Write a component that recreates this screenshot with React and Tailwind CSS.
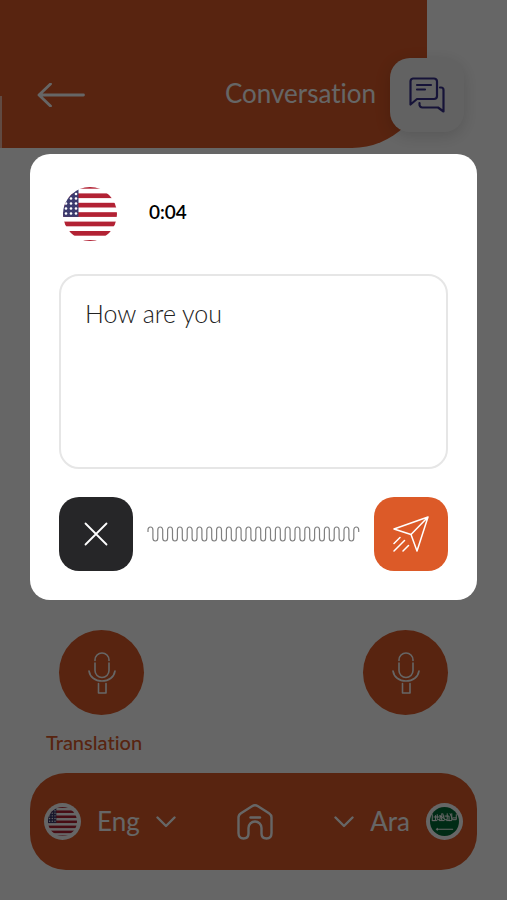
import { useId, useState } from 'react';

function UsFlag({ className }) {
  const clipId = useId();

  return (
    <svg className={className} viewBox="0 0 54 54" role="img" aria-label="English">
      <clipPath id={clipId}>
        <circle cx="27" cy="27" r="27" />
      </clipPath>
      <g clipPath={`url(#${clipId})`}>
        <rect width="54" height="54" fill="#fff" />
        {[-3, 6.4, 15.8, 25.2, 34.6, 44, 53].map((y) => (
          <rect key={y} y={y} width="54" height="4.7" fill="#b22234" />
        ))}
        <rect y="-3" width="15.5" height="32.9" fill="#3c3b6e" />
        {[
          [13, 7], [8, 11.5], [13, 16.5], [3, 16.5], [8, 16.5], [8, 21.5], [3, 26.5], [13, 26.5], [8, 26.5], [3, 21.5], [13, 11.5], [13, 21.5],
        ].map(([x, y]) => (
          <circle key={`${x}-${y}`} cx={x} cy={y} r="1.3" fill="#fff" />
        ))}
      </g>
    </svg>
  );
}

function SaudiFlag({ className }) {
  return (
    <svg className={className} viewBox="0 0 32 32" role="img" aria-label="Arabic">
      <circle cx="16" cy="16" r="16" fill="#006c35" />
      <path
        d="M2.500 8v7h3.500V9M8 8v6h3V9l2 5V7M4 11h6M14 7l2 7h3V7M16 10h5v5h3V7M22 7l3 7h4V8M2 15h6M10 15h6M18 15h4M25 12h4M12 10l4 3"
        fill="none"
        stroke="#fff"
        strokeWidth="1.1"
      />
      <path d="M7 24.500h18M8 23.500v2" fill="none" stroke="#fff" strokeWidth="1.2" strokeLinecap="round" />
    </svg>
  );
}

function MicIcon() {
  return (
    <svg className="h-[42px] w-[28px]" viewBox="0 0 28 42" fill="none" stroke="#fff" strokeWidth="1.6" strokeLinecap="round">
      <path d="M7 8.500V8a7 7 0 0 1 14 0v.5" />
      <path d="M7 11v7.500a7 7 0 0 0 14 0V11" />
      <path d="M1 19c1 6 6 10 13 10s12-4 13-10" />
      <path d="M10.500 31.500V41h7.500v-9.500" strokeLinejoin="round" />
    </svg>
  );
}

function ChevronIcon() {
  return (
    <svg className="h-3 w-5" viewBox="0 0 20 12" fill="none" stroke="currentColor" strokeWidth="2.4" strokeLinecap="round" strokeLinejoin="round">
      <path d="M1.500 1.500 10 10l8.500-8.500" />
    </svg>
  );
}

function Waveform() {
  const periods = 21;
  const step = 4.9;
  let path = 'M1 6V4';
  for (let i = 0; i <= periods; i += 1) {
    path += `a2.450 3 0 0 1 ${step} 0`;
    if (i < periods) {
      path += `v8a2.450 3 0 0 0 ${step} 0v-8`;
    }
  }
  path += 'v2';

  return (
    <svg className="h-4 min-w-0 flex-1" viewBox="0 0 213 16" fill="none" stroke="#808080" strokeWidth="1.2">
      <path d={path} />
    </svg>
  );
}

function MicButton({ label }) {
  return (
    <button aria-label={label} className="flex h-[85px] w-[85px] items-center justify-center rounded-full bg-[#dc5a28]">
      <MicIcon />
    </button>
  );
}

function RecordDialog() {
  const [text, setText] = useState('How are you');

  return (
    <div role="dialog" aria-label="Recording" className="w-full rounded-[20px] bg-white px-[29px] pt-[33px] pb-[29px]">
      <div className="flex items-center gap-8 pl-1">
        <UsFlag className="h-[54px] w-[54px]" />
        <span className="pb-1 text-[19px] leading-6 font-semibold text-black">0:04</span>
      </div>
      <textarea
        aria-label="Recognized text"
        value={text}
        onChange={(e) => setText(e.target.value)}
        className="mt-[33px] block h-[195px] w-full resize-none rounded-[20px] border-2 border-[#e6e6e6] px-6 py-[21px] text-[25px] leading-8 font-light text-[#222] outline-none"
      />
      <div className="mt-[28px] flex items-center gap-[14px]">
        <button aria-label="Cancel" className="flex h-[74px] w-[74px] items-center justify-center rounded-[20px] bg-[#262628]">
          <svg className="h-6 w-6" viewBox="0 0 24 24" fill="none" stroke="#fff" strokeWidth="1.8" strokeLinecap="round">
            <path d="M1.500 1.500l21 21M22.500 1.500l-21 21" />
          </svg>
        </button>
        <Waveform />
        <button aria-label="Send" className="flex h-[74px] w-[74px] items-center justify-center rounded-[20px] bg-[#dc5a28]">
          <svg className="h-9 w-9" viewBox="0 0 36 36" fill="none" stroke="#fff" strokeWidth="1.5" strokeLinecap="round" strokeLinejoin="round">
            <path d="M35 1 1 13l17 5.500L24 35 35 1 18 18.500" />
            <path d="M7 21.500 1 27.500M11.500 24.500 1 35M15.500 29.500 10 35" />
          </svg>
        </button>
      </div>
    </div>
  );
}

export default function App() {
  return (
    <div className="relative min-h-screen bg-white font-['Lato',sans-serif] [font-variant-ligatures:none]">
      <div className="flex min-h-screen flex-col">
        <header className="relative mr-20 flex h-[148px] items-start justify-between rounded-br-[75px] bg-[#dc5a28] pt-[58px] pl-[37px] text-white">
          <span className="absolute bottom-0 left-0 h-[52px] w-0.5 bg-[#f0b9a5]" />
          <button aria-label="Back" className="flex h-[74px] items-center">
            <svg className="h-6 w-12" viewBox="0 0 48 24" fill="none" stroke="currentColor" strokeWidth="2.8" strokeLinecap="round" strokeLinejoin="round">
              <path d="M13.500 1 2 12l11.500 11M2 12h44.500" />
            </svg>
          </button>
          <div className="-mr-[37px] flex items-center gap-[14px]">
            <h1 className="pb-1 text-[26px] leading-8">Conversation</h1>
            <button aria-label="Messages" className="flex h-[74px] w-[74px] items-center justify-center rounded-[20px] bg-[#f6f6f6] shadow-[0_4px_16px_rgba(0,0,0,0.15)]">
              <svg className="h-9 w-9" viewBox="0 0 36 36" fill="none" stroke="#38318c" strokeWidth="2.2" strokeLinecap="round" strokeLinejoin="round">
                <path d="M4 1.500h21a3 3 0 0 1 3 3v14.500a3 3 0 0 1-3 3H8l-6.500 5.500v-23a3 3 0 0 1 2.500-3z" />
                <path d="M8 8h14M8 12.500h8" />
                <path d="M31 10.500h1a2.500 2.500 0 0 1 2.500 2.500v21.500L29 30.500H13.500A3 3 0 0 1 10.500 27v-1" />
              </svg>
            </button>
          </div>
        </header>

        <main className="mt-auto px-[30px] pb-[30px]">
          <div className="flex justify-between px-[29px]">
            <MicButton label="Speak English" />
            <MicButton label="Speak Arabic" />
          </div>
          <h2 className="mt-3 pl-4 text-xl leading-[30px] font-medium text-[#dc5a28]">Translation</h2>
          <nav className="mt-4 flex h-[97px] items-center justify-between rounded-[36px] bg-[#dc5a28] px-[14px] text-[26px] text-white">
            <button className="flex items-center gap-4">
              <span className="rounded-full bg-white p-1">
                <UsFlag className="h-[29px] w-[29px]" />
              </span>
              Eng
              <ChevronIcon />
            </button>
            <a href="#home" aria-label="Home">
              <svg className="h-9 w-9" viewBox="0 0 36 36" fill="none" stroke="currentColor" strokeWidth="2.4" strokeLinecap="round" strokeLinejoin="round">
                <path d="M1.500 13.500c0-2 .8-3.200 2.500-4.300L15 2.200c2-1.200 4-1.200 6 0l11 7c1.700 1.100 2.500 2.300 2.500 4.300V29c0 3.500-2 5.500-5 5.500s-5-2-5-5V24a6.500 6.500 0 0 0-13 0v5.500c0 3-2 5-5 5s-5-2-5-5.500z" />
                <path d="M13.500 13.500h9.500" />
              </svg>
            </a>
            <button className="flex items-center gap-4">
              <ChevronIcon />
              Ara
              <span className="rounded-full bg-white p-1">
                <SaudiFlag className="h-[29px] w-[29px]" />
              </span>
            </button>
          </nav>
        </main>
      </div>

      <div className="absolute inset-0 flex items-start bg-black/60 px-[30px] pt-[154px]">
        <RecordDialog />
      </div>
    </div>
  );
}
